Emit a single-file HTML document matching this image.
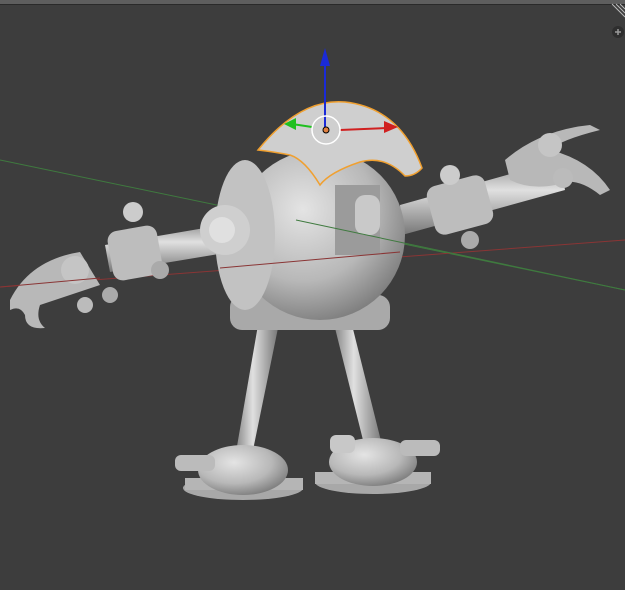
<!DOCTYPE html>
<html><head><style>
html,body{margin:0;padding:0;background:#3d3d3d;}
svg{display:block}
</style></head><body>
<svg width="625" height="590" viewBox="0 0 625 590" xmlns="http://www.w3.org/2000/svg">
<defs>
<radialGradient id="sph" cx="0.4" cy="0.35" r="0.7"><stop offset="0" stop-color="#e4e4e4"/><stop offset="0.6" stop-color="#b8b8b8"/><stop offset="1" stop-color="#7a7a7a"/></radialGradient>
<linearGradient id="tube" x1="0" y1="0" x2="0" y2="1"><stop offset="0" stop-color="#888"/><stop offset="0.4" stop-color="#e0e0e0"/><stop offset="1" stop-color="#777"/></linearGradient>
<linearGradient id="tubeh" x1="0" y1="0" x2="1" y2="0"><stop offset="0" stop-color="#888"/><stop offset="0.4" stop-color="#e0e0e0"/><stop offset="1" stop-color="#777"/></linearGradient>
</defs>
<rect width="625" height="590" fill="#3d3d3d"/>
<rect width="625" height="4" fill="#5e5e5e"/>
<rect y="4" width="625" height="1" fill="#2a2a2a"/>
<path d="M612 4 L625 17 M616 4 L625 13 M620 4 L625 9" stroke="#bbb" stroke-width="1"/>
<circle cx="618" cy="32" r="6" fill="#2e2e2e"/>
<path d="M615 32h6M618 29v6" stroke="#999" stroke-width="1.5"/>
<line x1="0" y1="160" x2="625" y2="290" stroke="#3f7a3f" stroke-width="1"/>
<line x1="0" y1="287" x2="625" y2="240" stroke="#8a3535" stroke-width="1"/>
<polygon points="258,325 278,328 252,455 236,452" fill="url(#tubeh)"/>
<polygon points="335,328 352,325 382,445 365,448" fill="url(#tubeh)"/>
<ellipse cx="243" cy="488" rx="60" ry="12" fill="#a8a8a8"/>
<rect x="185" y="478" width="118" height="12" fill="#b5b5b5"/>
<ellipse cx="243" cy="470" rx="45" ry="25" fill="url(#sph)"/>
<rect x="175" y="455" width="40" height="16" rx="6" fill="#bbb"/>
<ellipse cx="373" cy="482" rx="58" ry="12" fill="#a8a8a8"/>
<rect x="315" y="472" width="116" height="12" fill="#b5b5b5"/>
<ellipse cx="373" cy="462" rx="44" ry="24" fill="url(#sph)"/>
<rect x="400" y="440" width="40" height="16" rx="6" fill="#bbb"/>
<rect x="330" y="435" width="25" height="18" rx="6" fill="#c8c8c8"/>
<polygon points="105,245 240,222 243,250 110,272" fill="url(#tube)"/>
<rect x="110" y="228" width="50" height="50" rx="10" fill="#bdbdbd" transform="rotate(-10 135 253)"/>
<circle cx="133" cy="212" r="10" fill="#ccc"/>
<circle cx="160" cy="270" r="9" fill="#aaa"/>
<path d="M10 300 Q30 260 80 252 L100 285 Q70 295 40 305 Q35 320 45 328 Q25 330 25 315 Q20 305 10 310 Z" fill="#b8b8b8"/>
<circle cx="75" cy="270" r="14" fill="#c5c5c5"/>
<circle cx="110" cy="295" r="8" fill="#aaa"/>
<circle cx="85" cy="305" r="8" fill="#bbb"/>
<polygon points="400,205 560,160 565,190 402,235" fill="url(#tube)"/>
<rect x="430" y="180" width="60" height="50" rx="10" fill="#bdbdbd" transform="rotate(-15 460 205)"/>
<circle cx="450" cy="175" r="10" fill="#ccc"/>
<circle cx="470" cy="240" r="9" fill="#aaa"/>
<path d="M505 160 Q540 130 590 125 L600 130 Q560 140 550 150 Q590 160 610 190 L600 195 Q575 175 555 185 Q530 190 510 180 Z" fill="#b8b8b8"/>
<circle cx="550" cy="145" r="12" fill="#c5c5c5"/>
<circle cx="563" cy="178" r="10" fill="#bbb"/>
<rect x="230" y="295" width="160" height="35" rx="12" fill="#a9a9a9"/>
<circle cx="320" cy="235" r="85" fill="url(#sph)"/>
<ellipse cx="245" cy="235" rx="30" ry="75" fill="#c2c2c2"/>
<circle cx="225" cy="230" r="25" fill="#cfcfcf"/>
<circle cx="222" cy="230" r="13" fill="#e0e0e0"/>
<rect x="335" y="185" width="45" height="70" fill="#9b9b9b"/>
<rect x="355" y="195" width="25" height="40" rx="10" fill="#c9c9c9"/>
<path d="M258 150 Q300 98 345 102 Q400 108 422 168 Q415 176 405 176 Q385 155 360 162 Q330 172 320 185 Q305 160 290 155 Q275 152 258 150 Z" fill="#cfcfcf" stroke="#f0a030" stroke-width="1.5"/>
<line x1="296" y1="220" x2="625" y2="290" stroke="#3f7a3f" stroke-width="1"/>
<line x1="0" y1="287" x2="100" y2="278" stroke="#8a3535" stroke-width="1"/>
<line x1="220" y1="268" x2="400" y2="252" stroke="#8a3535" stroke-width="1"/>
<line x1="325" y1="130" x2="325" y2="60" stroke="#1a2ad8" stroke-width="2"/>
<polygon points="325,48 320,66 330,66" fill="#1a2ad8"/>
<line x1="312" y1="127" x2="292" y2="124" stroke="#20c020" stroke-width="2"/>
<polygon points="284,124 296,118 296,130" fill="#20c020"/>
<line x1="340" y1="130" x2="388" y2="128" stroke="#d02020" stroke-width="2"/>
<polygon points="398,127 384,121 384,133" fill="#d02020"/>
<circle cx="326" cy="130" r="14" fill="none" stroke="#fff" stroke-width="1.5"/>
<circle cx="326" cy="130" r="3" fill="#e08040" stroke="#000" stroke-width="1"/>
</svg>
</body></html>
